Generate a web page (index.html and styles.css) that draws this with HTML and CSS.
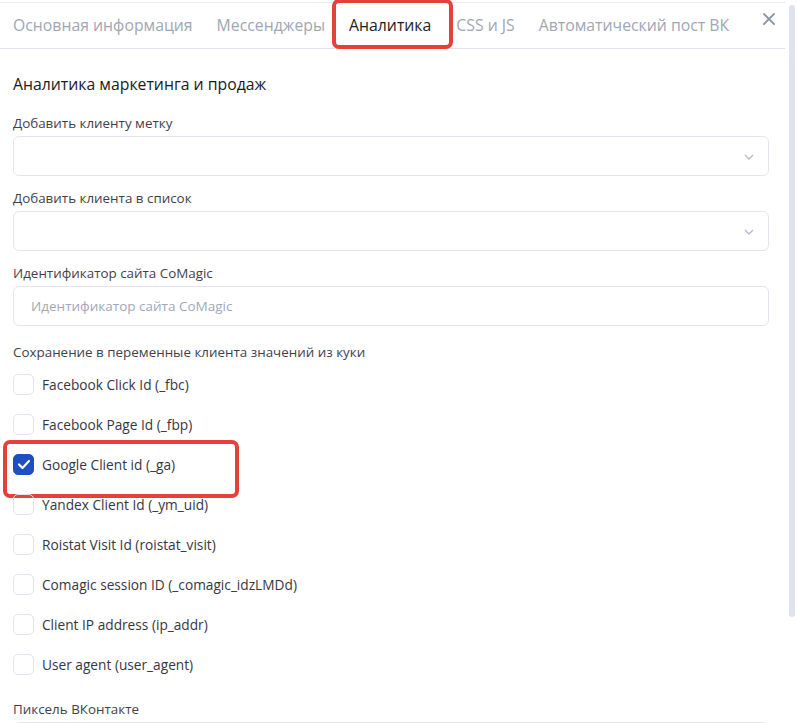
FILE: index.html
```html
<!DOCTYPE html>
<html lang="ru">
<head>
<meta charset="utf-8">
<link rel="stylesheet" href="styles.css">
</head>
<body>
<div class="modal">
  <div class="tabs">
    <div class="tab">Основная информация</div>
    <div class="tab">Мессенджеры</div>
    <div class="tab active">Аналитика</div>
    <div class="tab">CSS и JS</div>
    <div class="tab">Автоматический пост ВК</div>
    <div class="close">
      <svg width="12" height="12" viewBox="0 0 12 12"><path d="M1 1L11 11M11 1L1 11" stroke="#8f95a6" stroke-width="1.8" stroke-linecap="round"/></svg>
    </div>
  </div>
  <div class="body">
    <h3 class="section-title">Аналитика маркетинга и продаж</h3>
    <div class="field">
      <div class="label">Добавить клиенту метку</div>
      <div class="select"><svg class="chev" width="10" height="6" viewBox="0 0 10 6"><path d="M1 1L5 5L9 1" fill="none" stroke="#b4b9c9" stroke-width="1.3"/></svg></div>
    </div>
    <div class="field">
      <div class="label">Добавить клиента в список</div>
      <div class="select"><svg class="chev" width="10" height="6" viewBox="0 0 10 6"><path d="M1 1L5 5L9 1" fill="none" stroke="#b4b9c9" stroke-width="1.3"/></svg></div>
    </div>
    <div class="field">
      <div class="label">Идентификатор сайта CoMagic</div>
      <div class="input"><span class="placeholder">Идентификатор сайта CoMagic</span></div>
    </div>
    <div class="field cookies">
      <div class="label">Сохранение в переменные клиента значений из куки</div>
      <div class="checks">
        <div class="check"><span class="box"></span><span>Facebook Click Id (_fbc)</span></div>
        <div class="check"><span class="box"></span><span>Facebook Page Id (_fbp)</span></div>
        <div class="check highlighted"><span class="box checked"><svg width="14" height="11" viewBox="0 0 14 11"><path d="M2 5.5L5.5 9L12 2" fill="none" stroke="#fff" stroke-width="2.2" stroke-linecap="round" stroke-linejoin="round"/></svg></span><span>Google Client id (_ga)</span></div>
        <div class="check"><span class="box"></span><span>Yandex Client Id (_ym_uid)</span></div>
        <div class="check"><span class="box"></span><span>Roistat Visit Id (roistat_visit)</span></div>
        <div class="check"><span class="box"></span><span>Comagic session ID (_comagic_idzLMDd)</span></div>
        <div class="check"><span class="box"></span><span>Client IP address (ip_addr)</span></div>
        <div class="check"><span class="box"></span><span>User agent (user_agent)</span></div>
      </div>
    </div>
    <div class="field last">
      <div class="label">Пиксель ВКонтакте</div>
      <div class="input"></div>
    </div>
  </div>
  <div class="scrollbar"></div>
</div>
</body>
</html>
```
FILE: styles.css
```css
* { box-sizing: border-box; }
html, body { margin: 0; padding: 0; background: #fff; }
body {
  font-family: "Open Sans", "Noto Sans", sans-serif;
  color: #2b2b36;
  overflow: hidden;
  height: 723px;
}
.modal {
  position: relative;
  width: 797px;
  height: 723px;
  overflow: hidden;
  padding-top: 2px;
}
.tabs {
  display: flex;
  align-items: center;
  gap: 24px;
  width: 785px;
  height: 47px;
  border-top: 1px solid #e8e9ef;
  border-bottom: 1px solid #dfe3f0;
  padding: 0 0 1px 13px;
  position: relative;
}
.tab {
  font-size: 15.8px;
  color: #a1a6b5;
  white-space: nowrap;
  position: relative;
  line-height: 20px;
}
.tab.active { color: #1d1d24; margin-right: 1px; }
.tab.active::after {
  content: "";
  position: absolute;
  left: -17px;
  width: 113px;
  top: -16px;
  height: 42px;
  border: 4px solid #e4413a;
  border-radius: 7px;
}
.close {
  position: absolute;
  right: 10px;
  top: 10px;
  width: 12px;
  height: 12px;
  display: flex;
}
.body {
  padding: 25px 0 0 13px;
  width: 769px;
}
.section-title {
  margin: 0 0 20px;
  font-size: 15.8px;
  font-weight: 500;
  line-height: 20px;
  color: #1a1a22;
}
.field { margin-bottom: 13px; }
.field.cookies { margin-top: 17px; }
.label {
  font-size: 13.4px;
  line-height: 18px;
  color: #3f3f4c;
  margin-bottom: 4px;
}
.select, .input {
  height: 40px;
  border: 1px solid #e3e4ef;
  border-radius: 6px;
  position: relative;
  display: flex;
  align-items: center;
  padding: 0 17px;
}
.chev { position: absolute; right: 14px; top: 17px; }
.placeholder { font-size: 13.5px; color: #a3a7ba; }
.checks {
  display: flex;
  flex-direction: column;
  gap: 20px;
  padding-top: 9px;
}
.check {
  display: flex;
  align-items: center;
  gap: 8px;
  height: 20px;
  font-size: 13.7px;
  color: #363642;
  position: relative;
  width: fit-content;
}
.box {
  width: 21px;
  height: 21px;
  border: 1px solid #e3e4ef;
  border-radius: 5px;
  display: flex;
  align-items: center;
  justify-content: center;
  flex: none;
}
.box.checked { background: #1e4fc2; border-color: #1e4fc2; }
.check.highlighted::after {
  content: "";
  position: absolute;
  left: -10px;
  width: 228px;
  top: -14px;
  height: 50px;
  border: 4px solid #e4413a;
  border-radius: 7px;
}
.field.last { margin-bottom: 0; margin-top: 26px; }
.scrollbar {
  position: absolute;
  left: 789px;
  top: 5px;
  width: 6px;
  height: 612px;
  background: #e0e3ef;
  border-radius: 3px;
}
```
